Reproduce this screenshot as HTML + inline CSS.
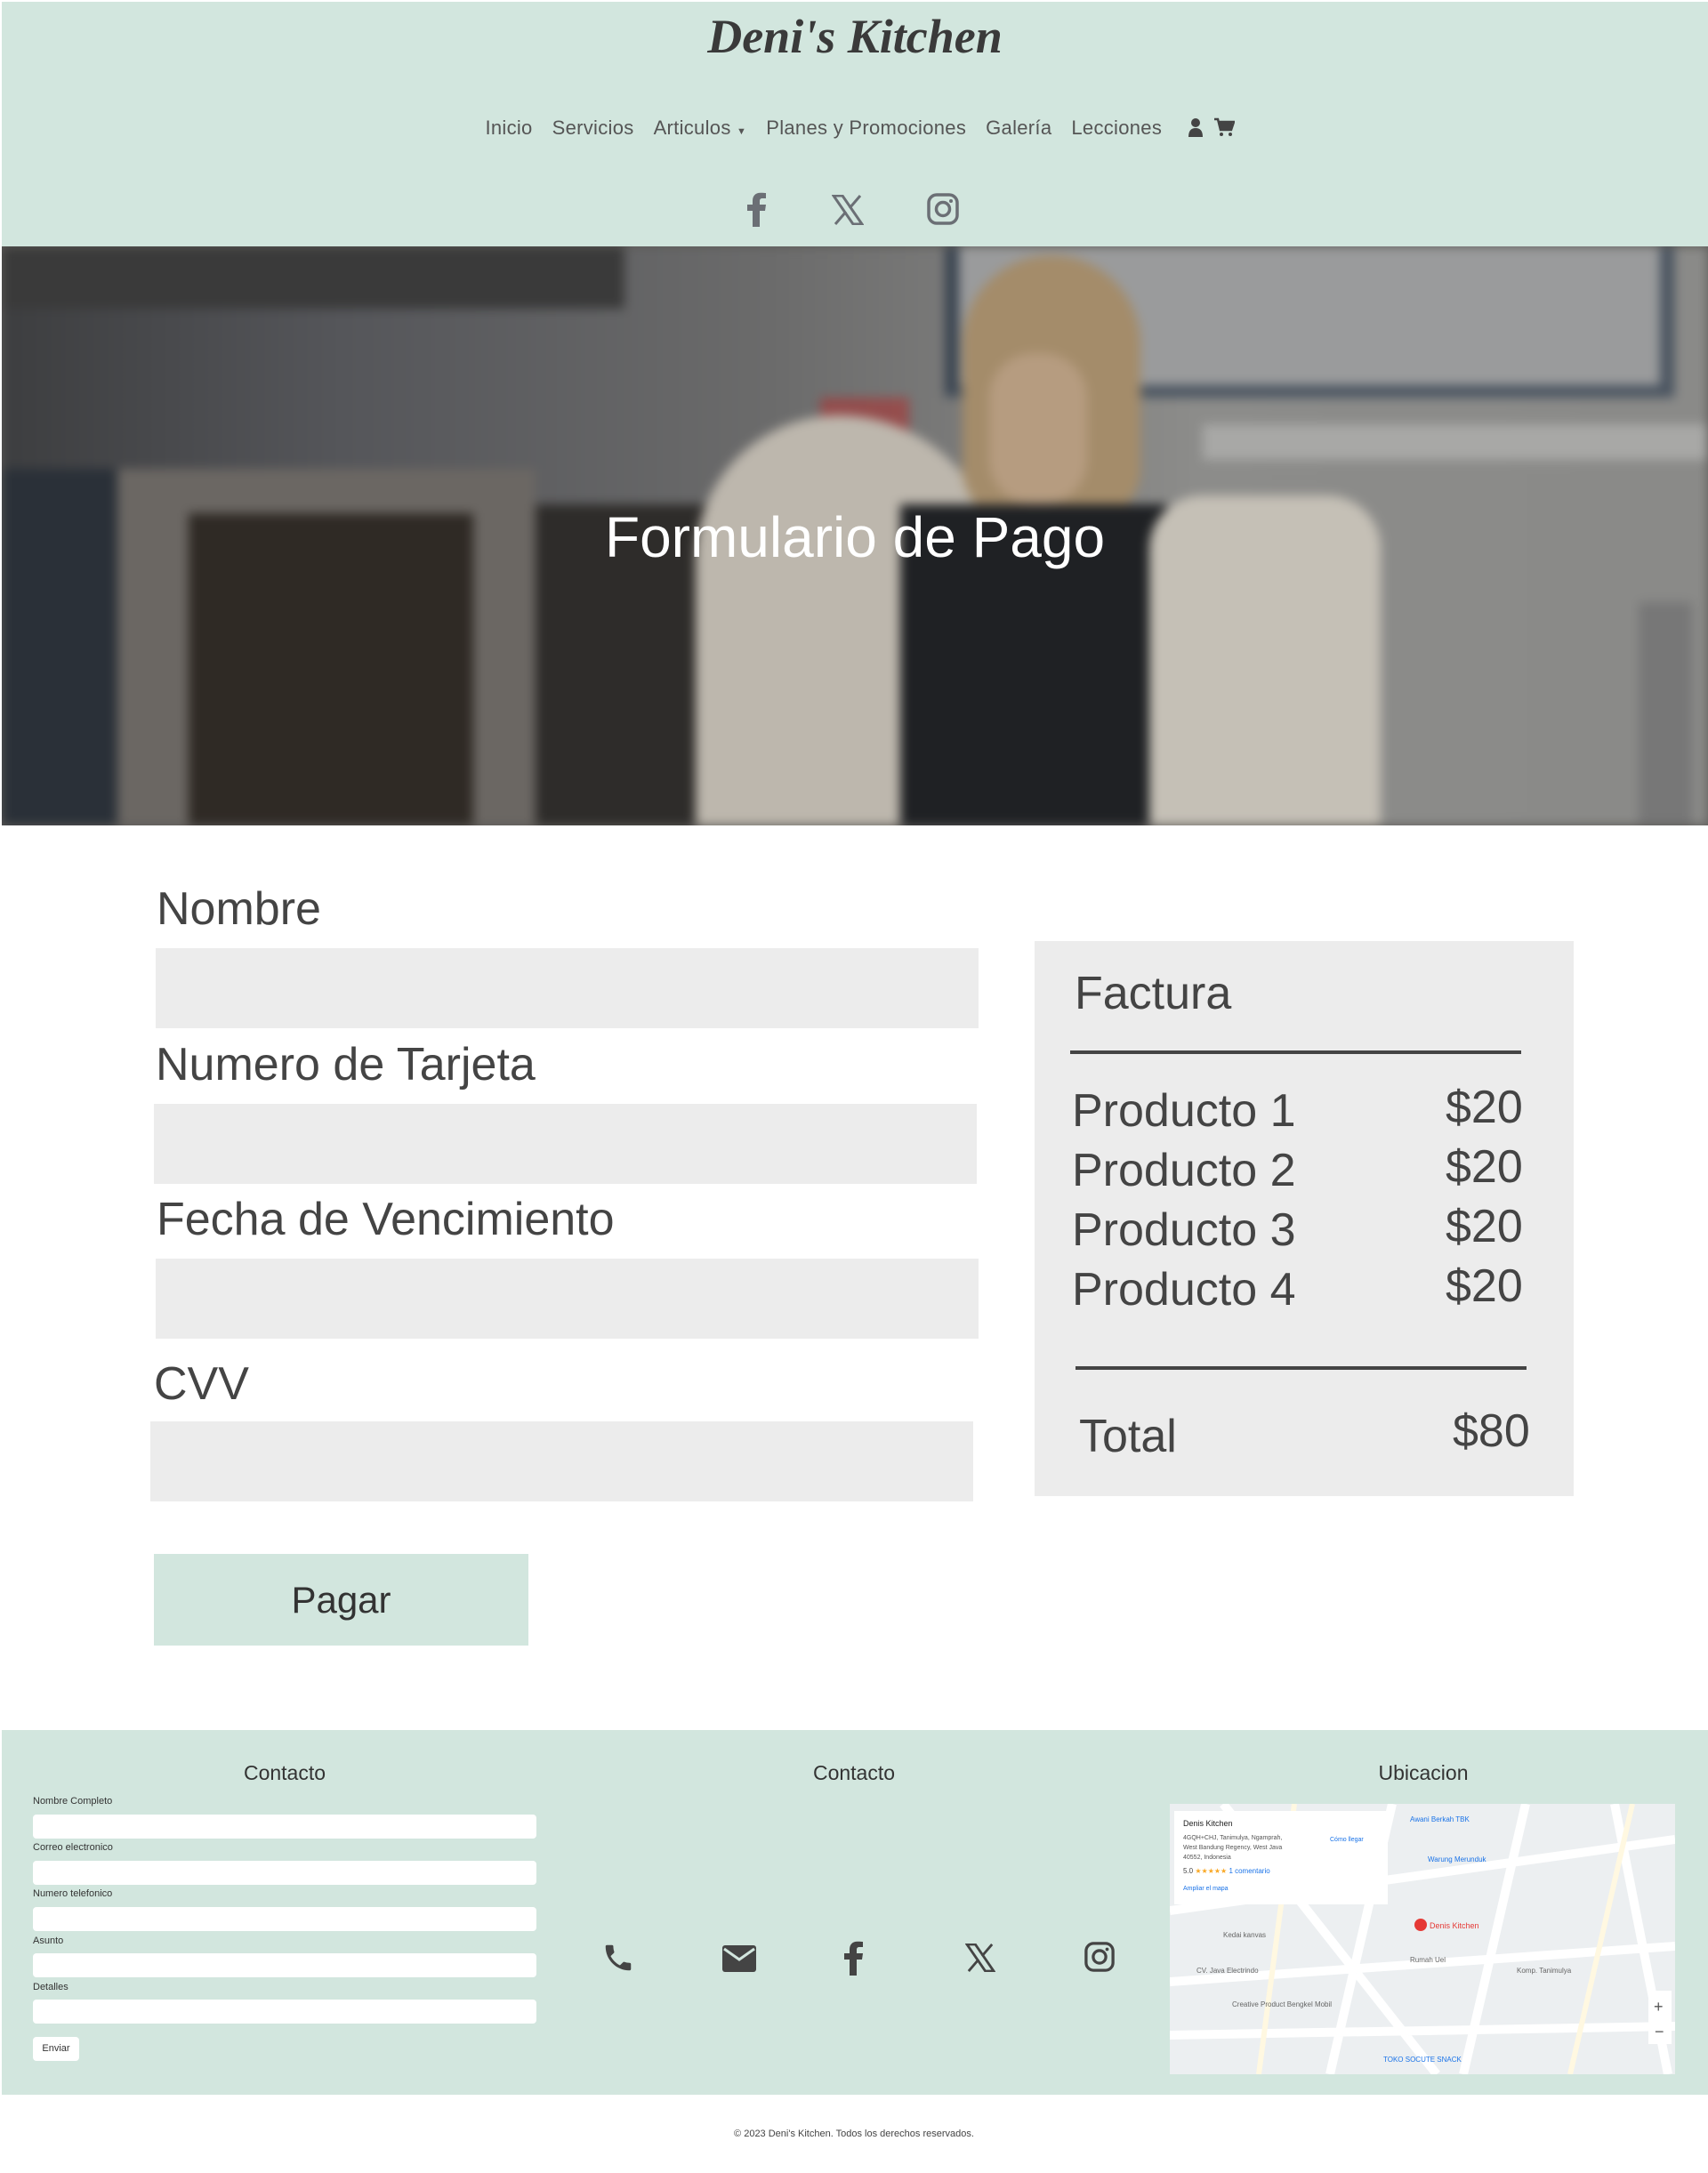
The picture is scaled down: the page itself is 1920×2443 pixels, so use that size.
<!DOCTYPE html>
<html><head><meta charset="utf-8">
<style>
*{box-sizing:border-box;margin:0;padding:0}
body{width:1920px;height:2443px;background:#fff;font-family:"Liberation Sans",sans-serif;color:#444;position:relative;overflow:hidden}
.abs{position:absolute}
header{position:absolute;left:2px;top:2px;width:1918px;height:275px;background:#d2e6de}
.logo{position:absolute;left:0;width:100%;top:8px;text-align:center;font-family:"Liberation Serif",serif;font-weight:bold;font-style:italic;font-size:54px;color:#3a3a3a}
.nav{position:absolute;top:129px;left:0;width:100%;text-align:center;font-size:22px;color:#555;white-space:nowrap;letter-spacing:.3px}
.nav span{margin:0 11px}
.hero{position:absolute;left:2px;top:277px;width:1918px;height:651px;overflow:hidden;background:#5d5b58}
.hero .bg div{position:absolute}
.hero .bg{position:absolute;inset:0;filter:blur(6px)}
.hero h1{position:absolute;left:0;width:100%;top:290px;text-align:center;color:#fff;font-weight:normal;font-size:64px;font-family:"Liberation Sans",sans-serif}
.lbl{position:absolute;font-size:52px;color:#444}
.inp{position:absolute;background:#ececec;height:90px}
.fact{position:absolute;left:1163px;top:1058px;width:606px;height:624px;background:#ececec}
.p{position:absolute;font-size:52px;color:#444}
footer{position:absolute;left:2px;top:1945px;width:1918px;height:410px;background:#d2e6de}
.fh{position:absolute;top:35px;font-size:23px;color:#333;text-align:center;width:300px}
.fl{position:absolute;left:35px;font-size:11px;color:#333}
.fi{position:absolute;left:35px;width:566px;height:27px;background:#fff;border-radius:4px}
</style></head><body>
<header>
<div class="logo">Deni's Kitchen</div>
<div class="nav"><span>Inicio</span><span>Servicios</span><span>Articulos <span style="font-size:11px;margin:0">▼</span></span><span>Planes y Promociones</span><span>Galería</span><span>Lecciones</span>
<svg width="20" height="22" viewBox="0 0 20 22" style="vertical-align:-3px;margin:0 10px"><circle cx="10" cy="6" r="5" fill="#444"/><path d="M2 22 Q2 12 10 12 Q18 12 18 22Z" fill="#444"/></svg><svg width="24" height="22" viewBox="0 0 24 22" style="vertical-align:-3px"><path d="M1 2h4l3 12h12l3-9H6" fill="none" stroke="#444" stroke-width="2.5"/><rect x="7" y="5" width="14" height="8" fill="#444"/><circle cx="9" cy="19" r="2" fill="#444"/><circle cx="19" cy="19" r="2" fill="#444"/></svg></div>
<svg class="abs" style="left:838px;top:213px" width="22" height="40" viewBox="0 0 22 40"><path d="M14 40V22h6l1-7h-7v-4c0-2 1-3 3-3h4V2c-1 0-3-.3-6-.3-6 0-9 3.5-9 9V15H0v7h6v18z" fill="#6b6f75"/></svg>
<svg class="abs" style="left:933px;top:217px" width="36" height="34" viewBox="0 0 36 34"><path d="M2 1h10l22 32H24z" fill="none" stroke="#6b6f75" stroke-width="3"/><path d="M32 1L20 15M4 33l12-14" stroke="#6b6f75" stroke-width="3"/></svg>
<svg class="abs" style="left:1040px;top:215px" width="36" height="36" viewBox="0 0 36 36"><rect x="2" y="2" width="32" height="32" rx="9" fill="none" stroke="#6b6f75" stroke-width="3.5"/><circle cx="18" cy="18" r="7.5" fill="none" stroke="#6b6f75" stroke-width="3.5"/><circle cx="27" cy="9" r="2" fill="#6b6f75"/></svg>
</header>

<div class="hero">
<div class="bg">
<div style="left:0;top:0;width:1918px;height:651px;background:linear-gradient(90deg,#3d3e40 0%,#55565a 20%,#6b6b6b 45%,#8c8c8a 70%,#8a8a88 100%)"></div>
<div style="left:0;top:0;width:700px;height:70px;background:#3a3a3a"></div>
<div style="left:1060px;top:0;width:820px;height:170px;background:#9a9b9c;border-left:16px solid #3a4450;border-right:16px solid #4a5460;border-bottom:14px solid #4a5460"></div>
<div style="left:1350px;top:200px;width:568px;height:40px;background:#a8a8a6"></div>
<div style="left:0;top:250px;width:140px;height:401px;background:#2a3038"></div>
<div style="left:130px;top:250px;width:470px;height:401px;background:#6b6763"></div>
<div style="left:210px;top:300px;width:320px;height:351px;background:#2f2a25"></div>
<div style="left:600px;top:290px;width:200px;height:361px;background:#2e2c2a"></div>
<div style="left:920px;top:170px;width:100px;height:100px;background:#a33;opacity:.6"></div>
<div style="left:780px;top:190px;width:340px;height:461px;background:#bdb7ad;border-radius:180px 200px 0 0"></div>
<div style="left:1080px;top:10px;width:200px;height:300px;background:#a48c6a;border-radius:100px 100px 60px 60px"></div>
<div style="left:1110px;top:120px;width:110px;height:170px;background:#b69c80;border-radius:50px"></div>
<div style="left:1010px;top:290px;width:300px;height:361px;background:#1f2124"></div>
<div style="left:1290px;top:280px;width:260px;height:371px;background:#c5c0b6;border-radius:60px 60px 0 0"></div>
<div style="left:1840px;top:400px;width:60px;height:251px;background:#777"></div>
</div>
<h1>Formulario de Pago</h1>
</div>

<div class="lbl" style="left:176px;top:992px">Nombre</div>
<div class="inp" style="left:175px;top:1066px;width:925px"></div>
<div class="lbl" style="left:175px;top:1167px">Numero de Tarjeta</div>
<div class="inp" style="left:173px;top:1241px;width:925px"></div>
<div class="lbl" style="left:176px;top:1341px">Fecha de Vencimiento</div>
<div class="inp" style="left:175px;top:1415px;width:925px"></div>
<div class="lbl" style="left:173px;top:1526px">CVV</div>
<div class="inp" style="left:169px;top:1598px;width:925px"></div>
<div class="abs" style="left:173px;top:1747px;width:421px;height:103px;background:#d2e6de;font-size:42px;color:#333;text-align:center;line-height:103px">Pagar</div>

<div class="fact"></div>
<div class="p" style="left:1208px;top:1087px">Factura</div>
<div class="abs" style="left:1203px;top:1181px;width:507px;height:4px;background:#444"></div>
<div class="p" style="left:1205px;top:1219px">Producto 1</div><div class="p" style="left:1625px;top:1215px">$20</div>
<div class="p" style="left:1205px;top:1286px">Producto 2</div><div class="p" style="left:1625px;top:1282px">$20</div>
<div class="p" style="left:1205px;top:1353px">Producto 3</div><div class="p" style="left:1625px;top:1349px">$20</div>
<div class="p" style="left:1205px;top:1420px">Producto 4</div><div class="p" style="left:1625px;top:1416px">$20</div>
<div class="abs" style="left:1209px;top:1536px;width:507px;height:4px;background:#444"></div>
<div class="p" style="left:1213px;top:1585px">Total</div><div class="p" style="left:1633px;top:1579px">$80</div>

<footer>
<div class="fh" style="left:168px">Contacto</div>
<div class="fh" style="left:808px">Contacto</div>
<div class="fh" style="left:1448px">Ubicacion</div>
<div class="fl" style="top:74px">Nombre Completo</div><div class="fi" style="top:95px"></div>
<div class="fl" style="top:126px">Correo electronico</div><div class="fi" style="top:147px"></div>
<div class="fl" style="top:178px">Numero telefonico</div><div class="fi" style="top:199px"></div>
<div class="fl" style="top:231px">Asunto</div><div class="fi" style="top:251px"></div>
<div class="fl" style="top:283px">Detalles</div><div class="fi" style="top:303px"></div>
<div class="abs" style="left:35px;top:345px;width:52px;height:27px;background:#fff;border-radius:4px;font-size:11px;color:#333;text-align:center;line-height:27px">Enviar</div>
<svg class="abs" style="left:674px;top:237px" width="38" height="38" viewBox="0 0 24 24"><path d="M6.6 10.8c1.4 2.8 3.8 5.1 6.6 6.6l2.2-2.2c.3-.3.7-.4 1-.2 1.1.4 2.3.6 3.6.6.6 0 1 .4 1 1V20c0 .6-.4 1-1 1C10.6 21 3 13.4 3 4c0-.6.4-1 1-1h3.5c.6 0 1 .4 1 1 0 1.3.2 2.5.6 3.6.1.3 0 .7-.2 1z" fill="#444"/></svg>
<svg class="abs" style="left:810px;top:242px" width="38" height="30" viewBox="0 0 38 30"><rect x="0" y="0" width="38" height="30" rx="3" fill="#444"/><path d="M2 4l17 12 17-12" fill="none" stroke="#d2e6de" stroke-width="3"/></svg>
<svg class="abs" style="left:947px;top:236px" width="22" height="40" viewBox="0 0 22 40"><path d="M14 40V22h6l1-7h-7v-4c0-2 1-3 3-3h4V2c-1 0-3-.3-6-.3-6 0-9 3.5-9 9V15H0v7h6v18z" fill="#444"/></svg>
<svg class="abs" style="left:1083px;top:240px" width="34" height="32" viewBox="0 0 36 34"><path d="M2 1h10l22 32H24z" fill="none" stroke="#444" stroke-width="3"/><path d="M32 1L20 15M4 33l12-14" stroke="#444" stroke-width="3"/></svg>
<svg class="abs" style="left:1217px;top:238px" width="34" height="34" viewBox="0 0 36 36"><rect x="2" y="2" width="32" height="32" rx="9" fill="none" stroke="#444" stroke-width="3.5"/><circle cx="18" cy="18" r="7.5" fill="none" stroke="#444" stroke-width="3.5"/><circle cx="27" cy="9" r="2" fill="#444"/></svg>
<svg class="abs" style="left:1313px;top:83px" width="568" height="304" viewBox="0 0 568 304">
<rect width="568" height="304" fill="#eceff1"/>
<g stroke="#fff" stroke-width="10" fill="none"><path d="M0 120L568 40M60 0L300 304M250 0L180 304M400 0L330 304M0 200L568 160M500 0L560 304M0 260L568 250"/></g>
<g stroke="#fff8e1" stroke-width="6" fill="none"><path d="M100 304L140 0M450 304L520 0"/></g>
<rect x="5" y="8" width="240" height="105" fill="#fff"/>
<text x="15" y="25" font-size="9" font-family="Liberation Sans" fill="#222">Denis Kitchen</text>
<text x="15" y="40" font-size="7" font-family="Liberation Sans" fill="#555">4GQH+CHJ, Tanimulya, Ngamprah,</text>
<text x="15" y="51" font-size="7" font-family="Liberation Sans" fill="#555">West Bandung Regency, West Java</text>
<text x="15" y="62" font-size="7" font-family="Liberation Sans" fill="#555">40552, Indonesia</text>
<text x="15" y="78" font-size="8" font-family="Liberation Sans" fill="#444">5.0 <tspan fill="#f9a825">★★★★★</tspan> <tspan fill="#1a73e8">1 comentario</tspan></text>
<text x="15" y="97" font-size="7" font-family="Liberation Sans" fill="#1a73e8">Ampliar el mapa</text>
<text x="180" y="42" font-size="7" font-family="Liberation Sans" fill="#1a73e8">Cómo llegar</text>
<circle cx="282" cy="136" r="7" fill="#e53935"/><text x="292" y="140" font-size="9" font-family="Liberation Sans" fill="#e53935">Denis Kitchen</text>
<text x="270" y="20" font-size="8" font-family="Liberation Sans" fill="#1a73e8">Awani Berkah TBK</text>
<text x="290" y="65" font-size="8" font-family="Liberation Sans" fill="#1a73e8">Warung Merunduk</text>
<text x="60" y="150" font-size="8" font-family="Liberation Sans" fill="#666">Kedai kanvas</text>
<text x="30" y="190" font-size="8" font-family="Liberation Sans" fill="#666">CV. Java Electrindo</text>
<text x="70" y="228" font-size="8" font-family="Liberation Sans" fill="#666">Creative Product Bengkel Mobil</text>
<text x="270" y="178" font-size="8" font-family="Liberation Sans" fill="#666">Rumah Uel</text>
<text x="390" y="190" font-size="8" font-family="Liberation Sans" fill="#666">Komp. Tanimulya</text>
<text x="240" y="290" font-size="8" font-family="Liberation Sans" fill="#1a73e8">TOKO SOCUTE SNACK</text>
<rect x="538" y="210" width="26" height="60" fill="#fff"/><text x="544" y="234" font-size="18" fill="#555">+</text><text x="545" y="262" font-size="18" fill="#555">−</text>
</svg>
</footer>
<div class="abs" style="left:0;width:1920px;top:2393px;text-align:center;font-size:11px;color:#444">© 2023 Deni's Kitchen. Todos los derechos reservados.</div>
</body></html>
